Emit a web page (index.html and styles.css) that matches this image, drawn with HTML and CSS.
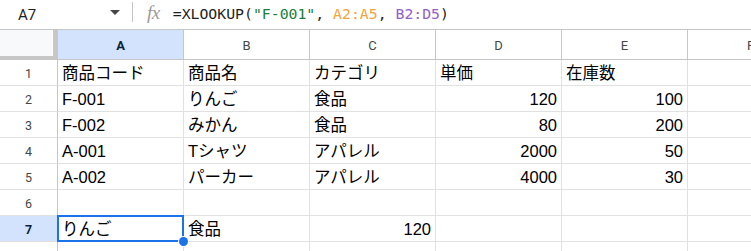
FILE: index.html
```html
<!DOCTYPE html>
<html lang="ja">
<head>
<meta charset="utf-8">
<link rel="stylesheet" href="styles.css">
</head>
<body>
<div class="fbar">
  <div class="namebox">A7</div>
  <svg class="drop" width="10" height="6" viewBox="0 0 10 6"><path d="M0 0H10L5 5Z" fill="#444746"/></svg>
  <div class="divider"></div>
  <span class="fx">fx</span>
  <div class="formula">=XLOOKUP(<span class="str">"F-001"</span>, <span class="r1">A2:A5</span>, <span class="r2">B2:D5</span>)</div>
</div>
<div class="sheet">
<div class="grid">
  <div class="corner"></div>
  <div class="ch sel-h">A</div><div class="ch">B</div><div class="ch">C</div><div class="ch">D</div><div class="ch">E</div><div class="ch">F</div>

  <div class="rh">1</div><div class="c">商品コード</div><div class="c">商品名</div><div class="c">カテゴリ</div><div class="c">単価</div><div class="c">在庫数</div><div class="c"></div>
  <div class="rh">2</div><div class="c">F-001</div><div class="c">りんご</div><div class="c">食品</div><div class="c n">120</div><div class="c n">100</div><div class="c"></div>
  <div class="rh">3</div><div class="c">F-002</div><div class="c">みかん</div><div class="c">食品</div><div class="c n">80</div><div class="c n">200</div><div class="c"></div>
  <div class="rh">4</div><div class="c">A-001</div><div class="c">Tシャツ</div><div class="c">アパレル</div><div class="c n">2000</div><div class="c n">50</div><div class="c"></div>
  <div class="rh">5</div><div class="c">A-002</div><div class="c">パーカー</div><div class="c">アパレル</div><div class="c n">4000</div><div class="c n">30</div><div class="c"></div>
  <div class="rh">6</div><div class="c"></div><div class="c"></div><div class="c"></div><div class="c"></div><div class="c"></div><div class="c"></div>
  <div class="rh sel-h">7</div><div class="c active">りんご<div class="selbox"></div><div class="handle"></div></div><div class="c">食品</div><div class="c n">120</div><div class="c"></div><div class="c"></div><div class="c"></div>
  <div class="rh"></div><div class="c"></div><div class="c"></div><div class="c"></div><div class="c"></div><div class="c"></div><div class="c"></div>
</div>
</div>
</body>
</html>
```
FILE: styles.css
```css
html, body {
  margin: 0;
  padding: 0;
  background: #fff;
  overflow: hidden;
}
body {
  font-family: "Liberation Sans", Arial, "Noto Sans CJK JP", sans-serif;
  color: #000;
  width: 751px;
  height: 251px;
}
.fbar {
  height: 29px;
  border-bottom: 1px solid #c4c7c5;
  display: flex;
  align-items: center;
}
.namebox {
  width: 92px;
  padding-left: 18px;
  font-family: Roboto, "Liberation Sans", sans-serif;
  font-size: 15px;
  color: #1f1f1f;
  line-height: 28px;
}
.drop {
  margin-top: -3px;
}
.divider {
  width: 1px;
  height: 20px;
  background: #c4c7c5;
  margin-left: 12px;
  margin-top: -6px;
}
.fx {
  font-family: "Liberation Serif", "DejaVu Serif", serif;
  font-style: italic;
  font-size: 19px;
  color: #9a9a9a;
  margin-left: 14px;
  margin-top: -4px;
  letter-spacing: -0.5px;
}
.formula {
  margin-left: 13px;
  font-family: "DejaVu Sans Mono", "Liberation Mono", monospace;
  font-size: 14.8px;
  color: #1f1f1f;
  margin-top: -3px;
  white-space: pre;
}
.str { color: #188038; }
.r1 { color: #f4a43a; }
.r2 { color: #9360c8; }

.sheet {
  width: 751px;
  height: 221px;
  overflow: hidden;
}
.grid {
  display: grid;
  grid-template-columns: 58px repeat(6, 126px);
  grid-template-rows: 30px repeat(8, 26px);
}
.grid > div {
  box-sizing: border-box;
}
.corner {
  background: #f8f9fa;
  border-right: 5px solid #c7c7c7;
  border-bottom: 4px solid #c7c7c7;
  box-shadow: inset -1px 0 0 #fff;
}
.ch {
  background: #fff;
  border-right: 1px solid #c4c7c5;
  border-bottom: 1px solid #c4c7c5;
  display: flex;
  align-items: center;
  justify-content: center;
  font-family: Roboto, "Liberation Sans", sans-serif;
  font-size: 13px;
  color: #444746;
  padding-top: 1px;
}
.rh {
  background: #fff;
  border-right: 1px solid #c4c7c5;
  border-bottom: 1px solid #e1e1e1;
  display: flex;
  align-items: center;
  justify-content: center;
  font-family: Roboto, "Liberation Sans", sans-serif;
  font-size: 12.5px;
  color: #444746;
  padding-top: 2px;
}
.sel-h {
  background: #d3e3fd;
  font-weight: bold;
  color: #0b1f3d;
}
.c {
  border-right: 1px solid #e1e1e1;
  border-bottom: 1px solid #e1e1e1;
  font-size: 16.5px;
  line-height: 20px;
  padding: 0 4px 2px 4px;
  display: flex;
  align-items: flex-end;
  white-space: nowrap;
}
.n {
  justify-content: flex-end;
}
.active {
  position: relative;
}
.selbox {
  position: absolute;
  left: -1px;
  top: -1px;
  right: -1px;
  bottom: -1px;
  border: 2px solid #1a73e8;
  pointer-events: none;
}
.handle {
  position: absolute;
  right: -5px;
  bottom: -5px;
  width: 9px;
  height: 9px;
  border-radius: 50%;
  background: #1a73e8;
  box-shadow: 0 0 0 1px #fff;
  z-index: 2;
}
```
